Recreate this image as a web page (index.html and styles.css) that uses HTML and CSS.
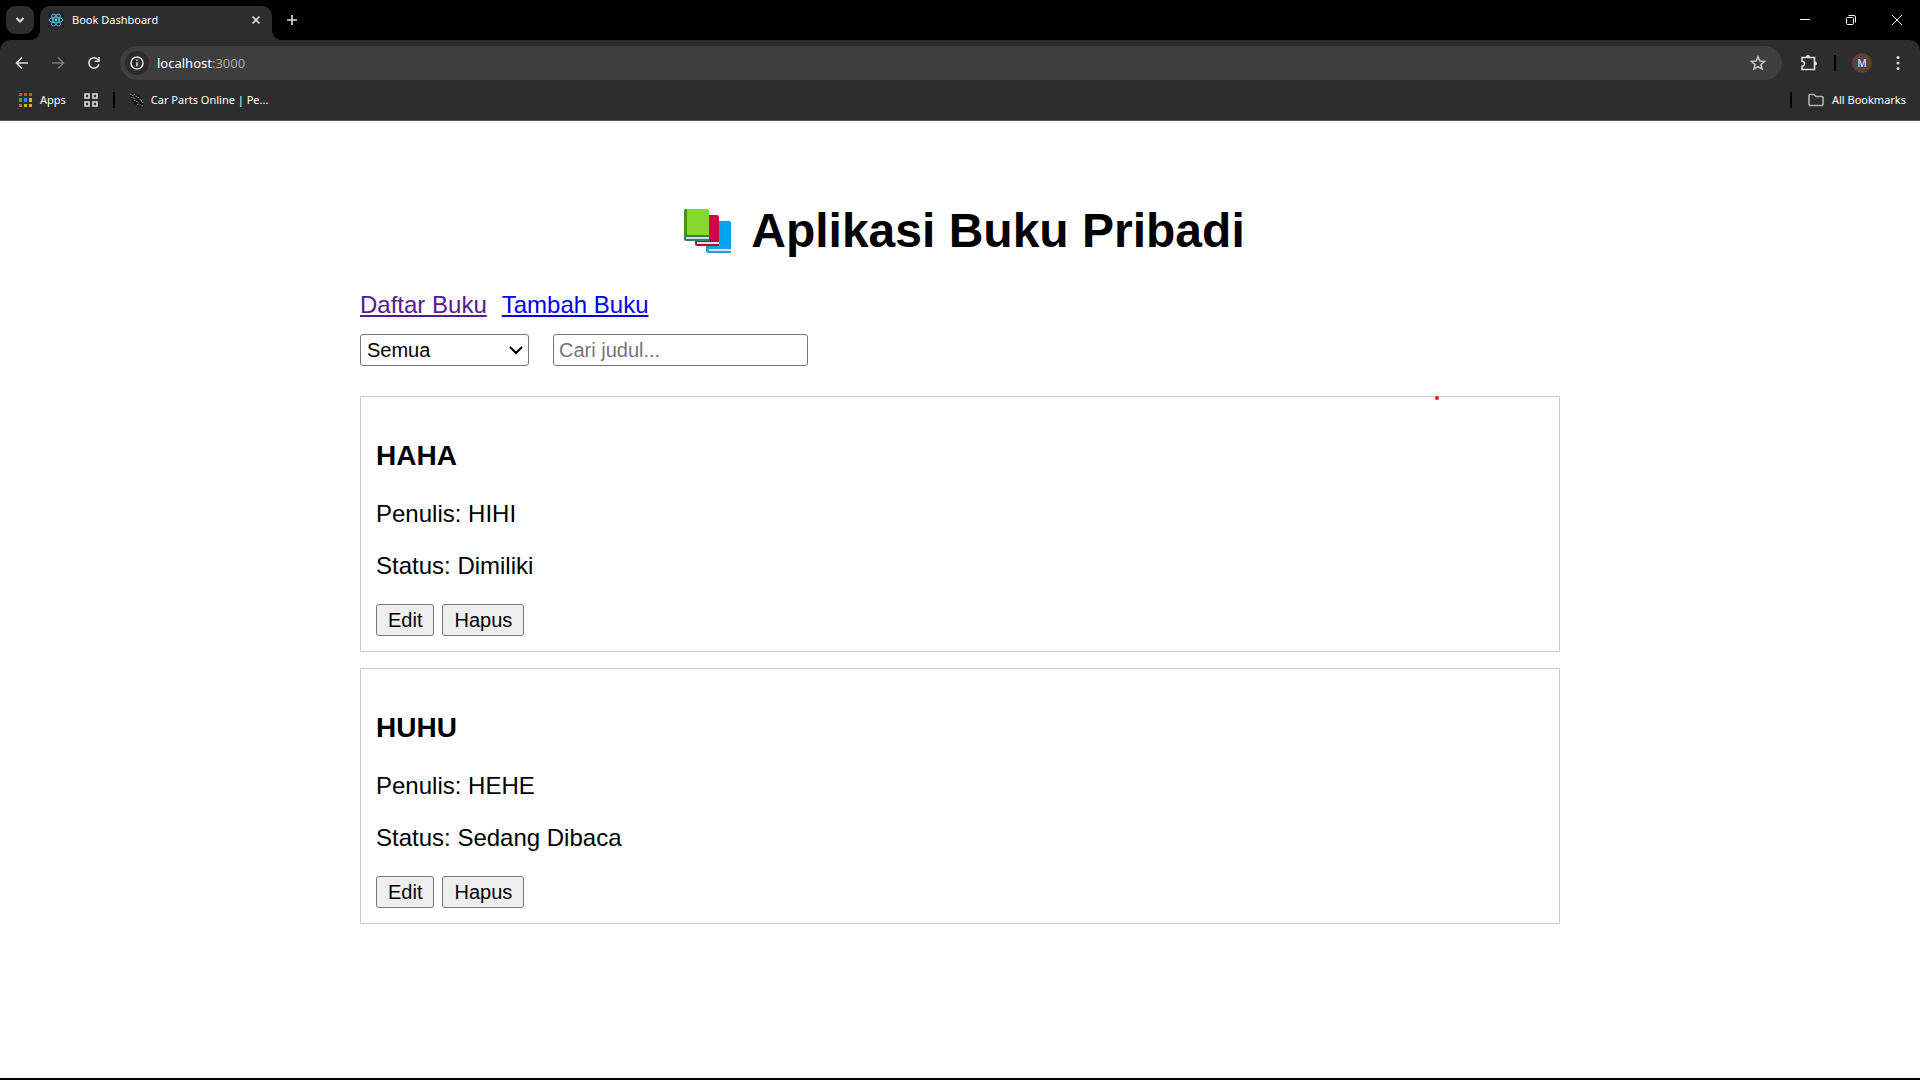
FILE: index.html
```html
<!DOCTYPE html>
<html lang="id">
<head>
<meta charset="utf-8">
<title>Book Dashboard</title>
<link rel="stylesheet" href="styles.css">
</head>
<body>
<header class="browser">
  <div class="tabstrip">
    <button class="tab-search" aria-label="Search tabs"><svg width="12" height="12" viewBox="0 0 12 12"><path d="M2.5 4l3.5 3.5L9.500 4" class="line bold"/></svg></button>
    <div class="tab">
      <svg class="favicon" width="16" height="16" viewBox="0 0 16 16"><rect width="16" height="16" rx="2" fill="#20232a"/><g fill="none" stroke="#58c4dc" stroke-width=".9"><ellipse cx="8" cy="8" rx="6.800" ry="2.700"/><ellipse cx="8" cy="8" rx="6.800" ry="2.700" transform="rotate(60 8 8)"/><ellipse cx="8" cy="8" rx="6.800" ry="2.700" transform="rotate(120 8 8)"/></g><circle cx="8" cy="8" r="1.400" fill="#58c4dc"/></svg>
      <span class="tab-title">Book Dashboard</span>
      <button aria-label="Close tab"><svg width="10" height="10" viewBox="0 0 10 10"><path d="M1.500 1.500l7 7M8.500 1.500l-7 7" class="line"/></svg></button>
    </div>
    <button class="new-tab" aria-label="New tab"><svg width="12" height="12" viewBox="0 0 12 12"><path d="M6 1v10M1 6h10" class="line"/></svg></button>
    <div class="window-controls">
      <button aria-label="Minimize"><svg width="12" height="12" viewBox="0 0 12 12"><path d="M1 5.500h10" class="line thin"/></svg></button>
      <button aria-label="Restore"><svg width="12" height="12" viewBox="0 0 12 12"><rect x="1.500" y="3.500" width="7" height="7" rx="1" class="line thin"/><path d="M3.500 1.500h5.500a1.500 1.500 0 0 1 1.500 1.500v5.500" class="line thin"/></svg></button>
      <button aria-label="Close"><svg width="12" height="12" viewBox="0 0 12 12"><path d="M1 1l10 10M11 1L1 11" class="line thin"/></svg></button>
    </div>
  </div>
  <div class="toolbar">
    <div class="nav-buttons">
      <button aria-label="Back"><svg width="14" height="14" viewBox="0 0 14 14"><path d="M13 7H1.500M7 1.500L1.500 7L7 12.500" class="line"/></svg></button>
      <button class="disabled" aria-label="Forward"><svg width="14" height="14" viewBox="0 0 14 14"><path d="M1 7h11.500M7 1.500L12.500 7L7 12.500" class="line"/></svg></button>
      <button aria-label="Reload"><svg width="14" height="14" viewBox="0 0 14 14"><path d="M12 8.500A5.200 5.200 0 1 1 11.500 4.200" class="line"/><path d="M12.800 1v5H7.800V4.500h3.500V1z" fill="currentColor"/></svg></button>
    </div>
    <div class="address">
      <button class="site-info" aria-label="Site information"><svg width="14" height="14" viewBox="0 0 14 14"><circle cx="7" cy="7" r="6" class="line"/><path d="M7 6.200v4M7 3.500v1.500" class="line"/></svg></button>
      <span class="url">localhost<span class="port">:3000</span></span>
      <button class="star" aria-label="Bookmark this tab"><svg width="16" height="16" viewBox="0 0 16 16"><path d="M8 1.800l1.900 4.200 4.600.5-3.500 3 1 4.500L8 11.700l-4 2.300 1-4.500-3.500-3 4.600-.5z" class="line"/></svg></button>
    </div>
    <button class="extensions" aria-label="Extensions"><svg width="18" height="18" viewBox="0 0 18 18"><path d="M2 3.500h12.500V15.500H2V12.200a2.400 2.400 0 0 0 0-5z" class="line"/><path d="M6 3a2 2 0 0 1 4 0zM15 7.500a2 2 0 0 1 0 4z" fill="currentColor"/></svg></button>
    <span class="separator"></span>
    <button class="avatar">M</button>
    <button class="menu" aria-label="Menu"><svg width="4" height="16" viewBox="0 0 4 16" fill="currentColor"><circle cx="2" cy="2.500" r="1.500"/><circle cx="2" cy="8" r="1.500"/><circle cx="2" cy="13.500" r="1.500"/></svg></button>
  </div>
  <nav class="bookmarks">
    <a href="#apps" class="apps"><svg width="13" height="14" viewBox="0 0 13 14"><path d="M0 0h3v3H0zM5 0h3v3H5zM10 0h3v3h-3z" fill="#f44336"/><path d="M0 5h3v4H0zM0 11h3v3H0z" fill="#34a853"/><path d="M5 5h3v4H5z" fill="#2d8cff"/><path d="M10 5h3v4h-3zM5 11h3v3H5zM10 11h3v3h-3z" fill="#fbac14"/></svg>Apps</a>
    <button class="grid" aria-label="Tab groups"><svg width="14" height="14" viewBox="0 0 14 14"><path d="M1 1h4v4H1zM9 1h4v4H9zM1 9h4v4H1zM9 9h4v4H9z" class="line"/></svg></button>
    <span class="separator"></span>
    <a href="#parts" class="parts"><svg width="16" height="16" viewBox="0 0 16 16"><ellipse cx="8" cy="8" rx="8.500" ry="4.500" transform="rotate(45 8 8)" fill="#141414"/><path d="M1 2l4 2M2 5l5 2M5 2l4 4M5 8l5 3M9 5l4 5M8 12l6 2M12 8l3 4" stroke="#808080" stroke-width="1.200" stroke-dasharray="1.500 1"/></svg>Car Parts Online | Pe...</a>
    <span class="separator all-separator"></span>
    <a href="#all" class="all"><svg width="16" height="14" viewBox="0 0 16 14"><path d="M1 2.500a1 1 0 0 1 1-1h4l2 2h6a1 1 0 0 1 1 1v7a1 1 0 0 1-1 1H2a1 1 0 0 1-1-1z" class="line"/></svg>All Bookmarks</a>
  </nav>
</header>
<main class="app">
  <h1><svg class="books" width="48" height="46" viewBox="0 0 48 46">
    <path d="M23 13h23q2 0 2 2v28H23z" fill="#00a4ef"/><path d="M23 13h3v26h-3z" fill="#0078d4"/><path d="M23 39h25v6H25q-2 0-2-2z" fill="#2b9be0"/><path d="M26 41h22v2H26z" fill="#d5e3ee"/>
    <path d="M12 7h22q2 0 2 2v27H12z" fill="#ca0b4a"/><path d="M12 32h24v6H14q-2 0-2-2z" fill="#b00c43"/><path d="M14 34h22v2H14z" fill="#e3dce3"/>
    <path d="M3 1h21q2 0 2 2v26H1V3q0-2 2-2z" fill="#86d72f"/><path d="M3 1h1v27H1V3q0-2 2-2z" fill="#44911b"/><path d="M1 27h25v6H3q-2 0-2-2z" fill="#2c8452"/><path d="M3 29h23v2H3z" fill="#d3dce0"/>
  </svg> Aplikasi Buku Pribadi</h1>
  <nav class="links"><a href="#daftar" class="visited">Daftar Buku</a><a href="#tambah">Tambah Buku</a></nav>
  <div class="filters">
    <div class="select-wrap">
      <select aria-label="Status"><option>Semua</option><option>Dimiliki</option><option>Sedang Dibaca</option></select>
      <svg class="caret" width="14" height="10" viewBox="0 0 14 10"><path d="M1 2l6 6l6-6" fill="none" stroke="#000" stroke-width="2"/></svg>
    </div>
    <input type="text" aria-label="Cari judul" placeholder="Cari judul...">
  </div>
  <section class="list">
    <article class="card">
      <span class="dot"></span>
      <h3>HAHA</h3>
      <p>Penulis: HIHI</p>
      <p>Status: Dimiliki</p>
      <div class="actions"><button>Edit</button><button>Hapus</button></div>
    </article>
    <article class="card">
      <h3>HUHU</h3>
      <p>Penulis: HEHE</p>
      <p>Status: Sedang Dibaca</p>
      <div class="actions"><button>Edit</button><button>Hapus</button></div>
    </article>
  </section>
</main>
</body>
</html>
```
FILE: styles.css
```css
* { box-sizing: border-box; }
body {
  margin: 0;
  min-height: 100vh;
  border-bottom: 2px solid #000;
  background: #fff;
  color: #000;
  font: 24px/27px "Liberation Sans", Arial, sans-serif;
}
svg { display: block; flex: none; }

/* Browser frame */
.browser {
  background: #000;
  color: #fff;
  font: 12px/16px "Noto Sans", "Segoe UI", sans-serif;
}
.browser button {
  display: flex;
  align-items: center;
  justify-content: center;
  padding: 0;
  border: 0;
  background: none;
  color: #dedede;
  font: inherit;
}
.browser a {
  display: flex;
  align-items: center;
  gap: 8px;
  color: #fff;
  font-size: 11px;
  text-decoration: none;
}
.line { fill: none; stroke: currentColor; stroke-width: 1.6; }
.bold { stroke-width: 2; }
.thin { stroke-width: 1; }

.tabstrip { display: flex; height: 40px; padding: 6px 0 0 6px; }
.browser .tab-search {
  width: 28px;
  height: 28px;
  border-radius: 9px;
  background: #2d2d2d;
}
.tab {
  position: relative;
  display: flex;
  align-items: center;
  gap: 8px;
  width: 232px;
  margin-left: 6px;
  padding: 0 11px 6px 8px;
  border-radius: 10px 10px 0 0;
  background: #2d2d2d;
}
.tab::before,
.tab::after {
  content: "";
  position: absolute;
  bottom: 0;
  width: 10px;
  height: 10px;
}
.tab::before { left: -10px; background: radial-gradient(circle at 0 0, transparent 10px, #2d2d2d 10px); }
.tab::after { right: -10px; background: radial-gradient(circle at 100% 0, transparent 10px, #2d2d2d 10px); }
.tab-title { flex: 1; font-size: 11px; }
.new-tab { width: 28px; height: 28px; margin-left: 6px; }
.window-controls { display: flex; margin-left: auto; height: 28px; }
.window-controls button { width: 46px; color: #fff; }

.toolbar {
  display: flex;
  align-items: center;
  height: 46px;
  padding: 0 14px 0 8px;
  border-radius: 10px 10px 0 0;
  background: #2d2d2d;
}
.nav-buttons { display: flex; gap: 8px; margin-right: 12px; }
.nav-buttons button { width: 28px; height: 28px; }
.browser .disabled { color: #777; }
.address {
  display: flex;
  flex: 1;
  align-items: center;
  height: 34px;
  padding: 0 16px 0 5px;
  border-radius: 17px;
  background: #3e3e3e;
}
.browser .site-info {
  width: 24px;
  height: 24px;
  border-radius: 50%;
  background: #2b2b2b;
}
.browser .star { color: #c0c0c0; }
.url { flex: 1; margin-left: 8px; font-size: 13px; }
.port { color: #a8a8a8; }
.extensions { margin-left: 18px; }
.separator { width: 2px; height: 16px; background: #000; }
.extensions + .separator { margin-left: 16px; }
.browser .avatar {
  width: 20px;
  height: 20px;
  margin-left: 16px;
  border-radius: 50%;
  background: #5d4037;
  color: #fff;
  font-size: 10px;
}
.menu { margin-left: 24px; margin-right: 6px; }

.bookmarks {
  display: flex;
  align-items: center;
  height: 35px;
  padding: 0 14px 6px 19px;
  border-bottom: 1px solid #555;
  background: #2d2d2d;
}
.grid { margin: 0 15px 0 18px; }
.browser .parts { margin-left: 14px; gap: 6px; }
.all-separator { margin-left: auto; }
.browser .all { margin-left: 16px; color: #fff; }
.all svg { color: #b0b0b0; }

/* Book application */
.app { max-width: 1200px; margin: 0 auto; padding: 82px 0; }
h1 {
  display: flex;
  justify-content: center;
  align-items: center;
  gap: 20px;
  margin: 0;
  padding-left: 8px;
  font-size: 48px;
  line-height: 56px;
}
.links { display: flex; gap: 15px; margin-top: 32px; }
.links a { color: #00e; }
.links .visited { color: #551a8b; }
.filters { display: flex; gap: 24px; margin: 16px 0 30px; }
.select-wrap { position: relative; }
select,
input {
  display: block;
  height: 32px;
  border: 1px solid #767676;
  border-radius: 3px;
  background: #fff;
  color: #000;
  font: 20px/24px "Liberation Sans", Arial, sans-serif;
}
select { width: 169px; padding: 0 6px; appearance: none; }
input { width: 255px; padding: 0 5px; }
input::placeholder { color: #757575; }
.caret { position: absolute; right: 6px; top: 11px; }
.list { display: grid; gap: 16px; }
.card { position: relative; padding: 15px; border: 1px solid #ccc; }
.dot {
  position: absolute;
  top: -1px;
  right: 120px;
  width: 4px;
  height: 4px;
  border-radius: 50%;
  background: #e8141c;
}
h3 { margin: 28px 0; font-size: 28px; line-height: 32px; }
p { margin: 0 0 25px; }
.actions { display: flex; gap: 8px; }
.actions button {
  height: 32px;
  padding: 0 11px;
  border: 1px solid #767676;
  border-radius: 3px;
  background: #efefef;
  color: #000;
  font: 20px/24px "Liberation Sans", Arial, sans-serif;
}
```
